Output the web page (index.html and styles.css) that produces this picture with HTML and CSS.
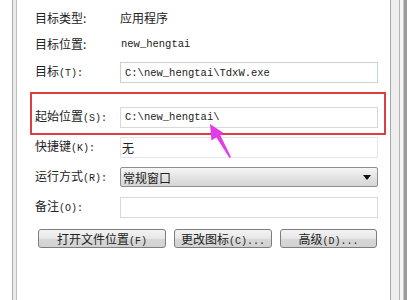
FILE: index.html
```html
<!DOCTYPE html>
<html lang="zh-CN">
<head>
<meta charset="utf-8">
<link rel="stylesheet" href="styles.css">
</head>
<body>
<div class="window">
  <div class="gutter-left"></div>
  <main class="panel">
    <div class="row short"><span class="label">目标类型:</span><span class="value">应用程序</span></div>
    <div class="row short"><span class="label">目标位置:</span><span class="value mono">new_hengtai</span></div>
    <div class="row tall"><span class="label">目标<span class="k">(T):</span></span><div class="field target mono">C:\new_hengtai\TdxW.exe</div></div>
    <div class="row spaced"><span class="label">起始位置<span class="k">(S):</span></span><div class="field mono">C:\new_hengtai\</div></div>
    <div class="row"><span class="label">快捷键<span class="k">(K):</span></span><div class="field light">无</div></div>
    <div class="row"><span class="label">运行方式<span class="k">(R):</span></span><div class="select">常规窗口<span class="caret"></span></div></div>
    <div class="row"><span class="label">备注<span class="k">(O):</span></span><div class="field"></div></div>
    <div class="buttons">
      <button class="btn b1">打开文件位置<span class="k">(F)</span></button>
      <button class="btn b2">更改图标<span class="k">(C)...</span></button>
      <button class="btn b3">高级<span class="k">(D)...</span></button>
    </div>
  </main>
  <div class="gutter-right"></div>
</div>
<div class="highlight"></div>
<svg class="arrow" viewBox="0 0 407 300" width="407" height="300">
  <polygon points="210,124 223.5,133 211.5,140.5" fill="#e23ce6"/>
  <polygon points="215.5,136 219.5,133.5 231,157 229.5,158" fill="#e23ce6"/>
</svg>
</body>
</html>
```

FILE: styles.css
```css
html, body {
  margin: 0;
  padding: 0;
  background: #ffffff;
}
body {
  width: 407px;
  height: 300px;
  overflow: hidden;
  position: relative;
  font-family: "Noto Sans CJK SC", "Noto Sans", sans-serif;
  font-size: 12px;
  color: #222;
}
.window {
  display: flex;
  height: 300px;
}
.gutter-left {
  width: 17px;
  flex: none;
  background: linear-gradient(to right, #ffffff 0 12px, #a9a9a9 12px 13px, #ececec 13px 16px, #bdbdbd 16px 17px);
}
.gutter-right {
  width: 17px;
  flex: none;
  background: linear-gradient(to right, #a6a6a6 0 1px, #eeeeee 1px 9px, #b3b3b3 9px 10px, #f4f4f4 10px 13px, #c8c8c8 13px 14px, #9a9a9a 14px 17px);
}
.panel {
  width: 373px;
  flex: none;
  box-sizing: border-box;
  padding: 5px 0 0 18px;
  display: flex;
  flex-direction: column;
}
.row {
  display: grid;
  grid-template-columns: 85px 258px;
  align-items: center;
  height: 30px;
}
.row.short { height: 26px; }
.row.tall { height: 31px; }
.row.spaced { margin-top: 14px; }
.label {
  line-height: 14px;
  white-space: nowrap;
}
.value {
  line-height: 14px;
  color: #222;
}
.k {
  font-family: "Liberation Mono", "DejaVu Sans Mono", monospace;
  font-size: 10px;
}
.mono {
  font-family: "Liberation Mono", "DejaVu Sans Mono", monospace;
  font-size: 10.5px;
}
.value.mono {
  padding-left: 1px;
}
.field {
  box-sizing: border-box;
  height: 21px;
  border: 1px solid #d9d9d9;
  background: #fff;
  padding: 0 0 0 4px;
  display: flex;
  align-items: center;
  color: #222;
}
.field.target {
  border-color: #c6d4cd;
}
.field.light {
  border-color: #e6e6e6;
  padding-left: 1px;
}
.select {
  box-sizing: border-box;
  height: 20px;
  border: 1px solid #8f8f8f;
  border-radius: 2px;
  background: linear-gradient(#f6f6f6, #e2e2e2 55%, #d6d6d6);
  display: flex;
  align-items: center;
  padding-left: 2px;
  position: relative;
}
.caret {
  margin-left: auto;
  margin-right: 6px;
  width: 0;
  height: 0;
  border-left: 4px solid transparent;
  border-right: 4px solid transparent;
  border-top: 5px solid #111;
}
.buttons {
  display: flex;
  gap: 8px;
  margin: 7px 0 0 3px;
}
.btn {
  box-sizing: border-box;
  height: 19px;
  padding: 0;
  border: 1px solid #7d7d7d;
  border-radius: 3px;
  background: linear-gradient(#f4f4f4, #e6e6e6 50%, #d7d7d7 51%, #d2d2d2);
  font-family: "Noto Sans CJK SC", "Noto Sans", sans-serif;
  font-size: 12px;
  color: #222;
  line-height: 17px;
  text-align: center;
}
.b1 { width: 128px; }
.b2 { width: 98px; }
.b3 { width: 97px; }
.highlight {
  position: absolute;
  left: 30px;
  top: 92px;
  width: 356px;
  height: 43px;
  box-sizing: border-box;
  border: 2px solid #dc3f3f;
  pointer-events: none;
}
.arrow {
  position: absolute;
  left: 0;
  top: 0;
  pointer-events: none;
}
```
